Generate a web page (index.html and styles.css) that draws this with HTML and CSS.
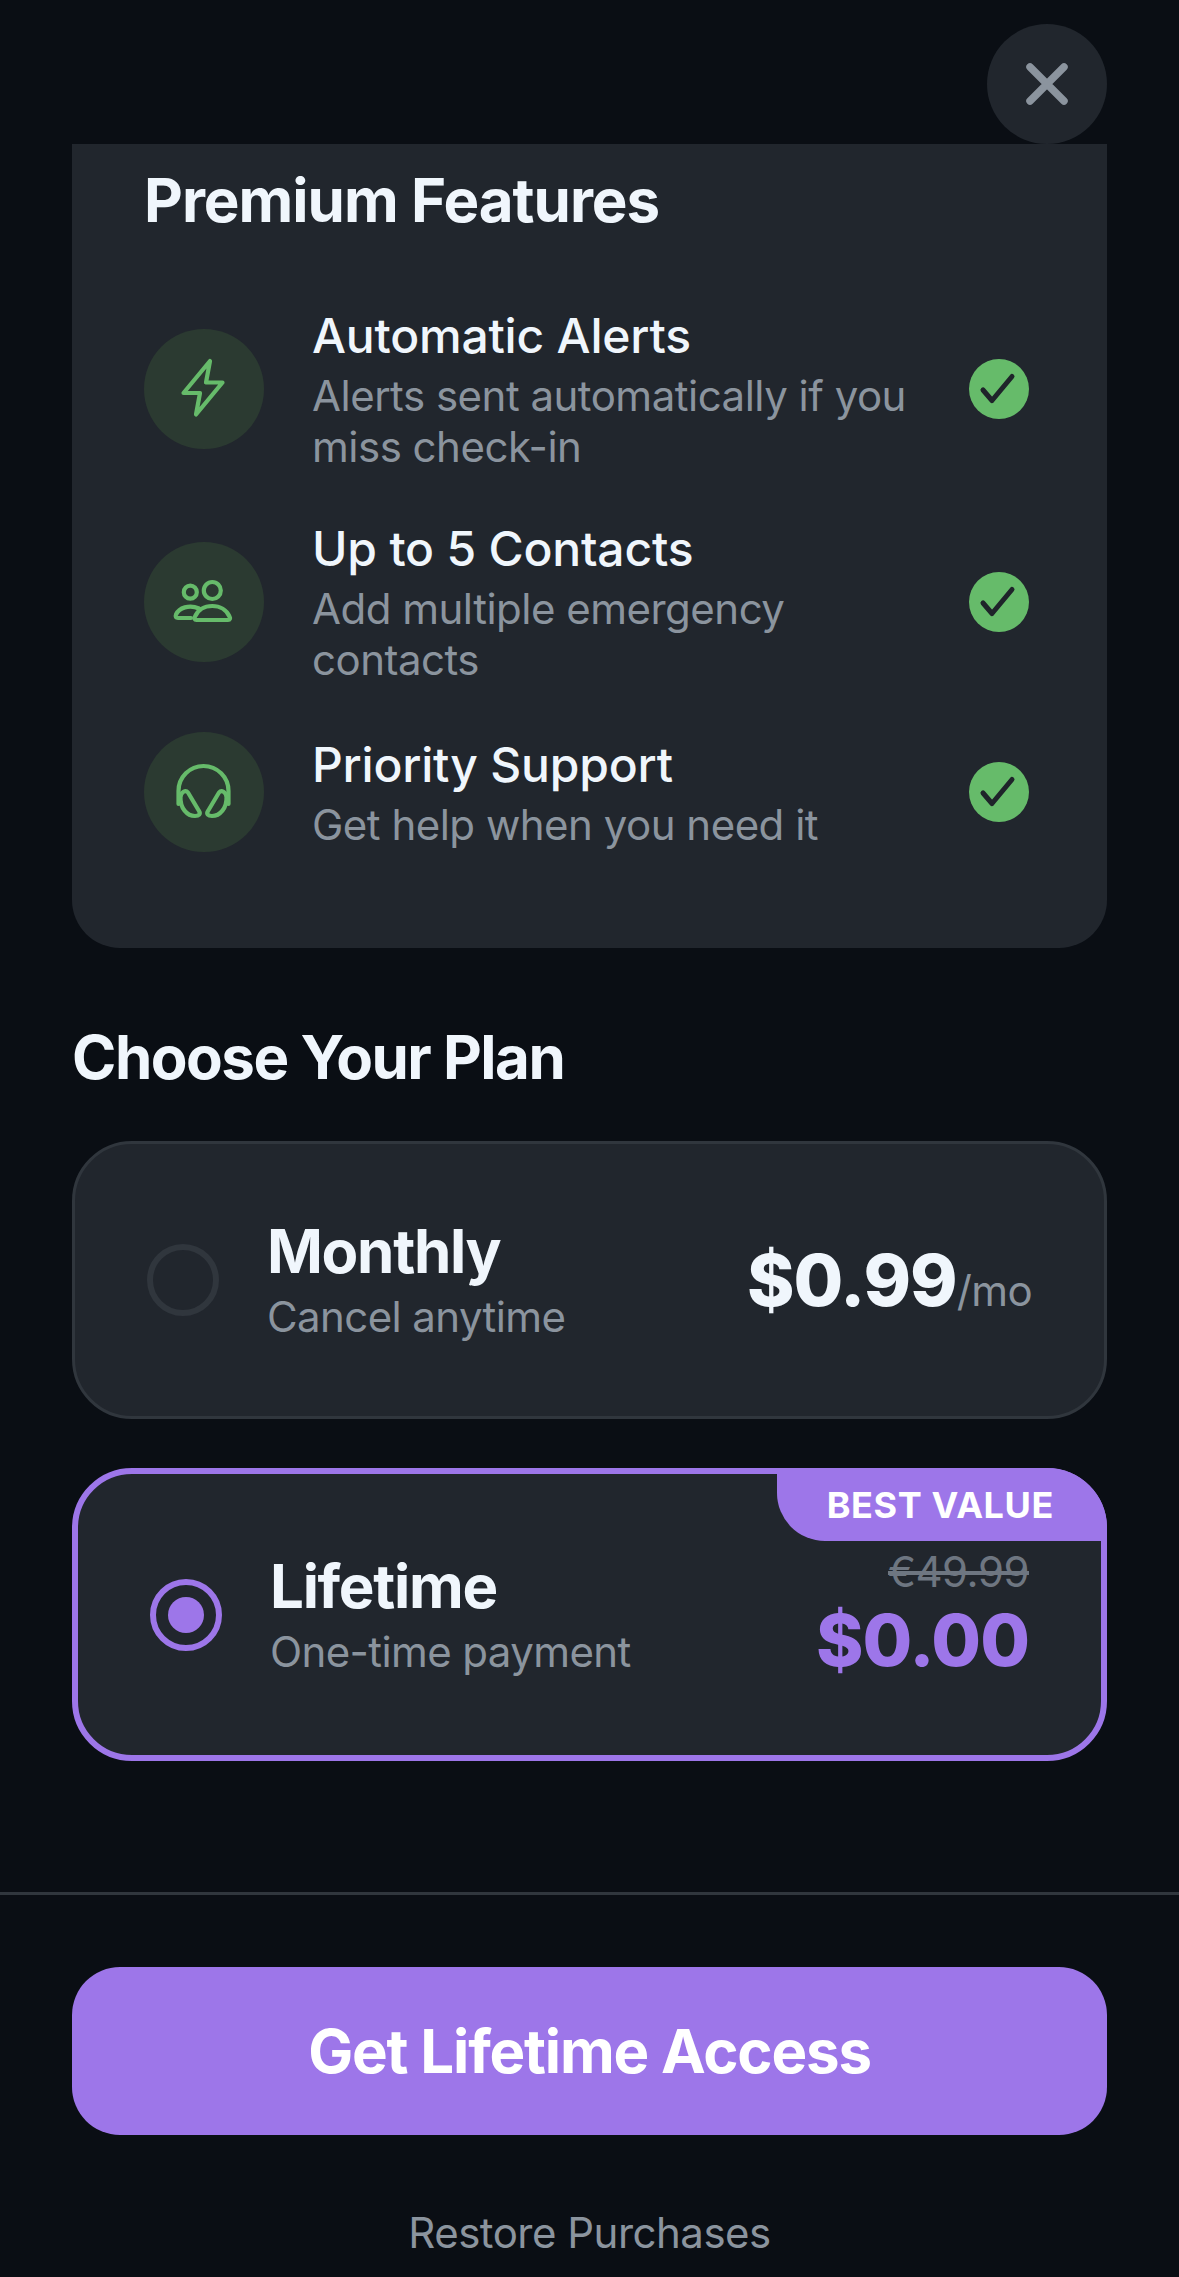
FILE: index.html
```html
<!DOCTYPE html>
<html lang="en">
<head>
    <meta charset="UTF-8">
    <meta name="viewport" content="width=device-width, initial-scale=1.0">
    <title>Premium</title>
    <link rel="stylesheet" href="styles.css">
</head>
<body>
    <div class="content">
        <div class="closeRow">
            <button class="closeBtn" type="button" aria-label="Close">
                <svg width="120" height="120" viewBox="0 0 120 120"><path d="M43 43 L77 77 M77 43 L43 77" class="closeX"/></svg>
            </button>
        </div>

        <section class="featuresCard">
            <h2 class="cardTitle">Premium Features</h2>
            <ul class="featureList">
                <li class="feature">
                    <span class="featureIcon">
                        <svg width="120" height="120" viewBox="0 0 120 120"><path class="line" d="M66 32 L62 53.5 H78.5 L52 85.5 L56 64 H39.5 Z"/></svg>
                    </span>
                    <div class="featureText">
                        <div class="featureName">Automatic Alerts</div>
                        <div class="featureDesc">Alerts sent automatically if you miss check-in</div>
                    </div>
                    <span class="check">
                        <svg width="60" height="60" viewBox="0 0 60 60"><path class="checkMark" d="M14 31 L23 41.5 L43 17.5"/></svg>
                    </span>
                </li>
                <li class="feature">
                    <span class="featureIcon">
                        <svg width="120" height="120" viewBox="0 0 120 120">
                            <circle class="line" cx="68.3" cy="48.5" r="8.5"/>
                            <circle class="line" cx="46.3" cy="50.2" r="6.5"/>
                            <path class="line" d="M52.5 78 C50.5 78 50 76.5 51 74.5 C54 68 60.5 64 68.3 64 C76 64 82.5 68 85.5 74.5 C86.5 76.5 86 78 84 78 Z"/>
                            <path class="line" d="M55 66.5 C45 62 35 66 32 72.5 C31 75 32 76 34 76 H47"/>
                        </svg>
                    </span>
                    <div class="featureText">
                        <div class="featureName">Up to 5 Contacts</div>
                        <div class="featureDesc">Add multiple emergency contacts</div>
                    </div>
                    <span class="check">
                        <svg width="60" height="60" viewBox="0 0 60 60"><path class="checkMark" d="M14 31 L23 41.5 L43 17.5"/></svg>
                    </span>
                </li>
                <li class="feature">
                    <span class="featureIcon">
                        <svg width="120" height="120" viewBox="0 0 120 120">
                            <path class="line" d="M34.5 72 V59 a25 25 0 0 1 50 0 V72"/>
                            <path class="line" d="M44 60.5 L55 79 C57 82 55 84 51 84 C43 84 36 76 36.5 65 C37 60 41.5 57.5 44 60.5 Z"/>
                            <path class="line" d="M75 60.5 L64 79 C62 82 64 84 68 84 C76 84 83 76 82.5 65 C82 60 77.5 57.5 75 60.5 Z"/>
                        </svg>
                    </span>
                    <div class="featureText">
                        <div class="featureName">Priority Support</div>
                        <div class="featureDesc">Get help when you need it</div>
                    </div>
                    <span class="check">
                        <svg width="60" height="60" viewBox="0 0 60 60"><path class="checkMark" d="M14 31 L23 41.5 L43 17.5"/></svg>
                    </span>
                </li>
            </ul>
        </section>

        <h2 class="planHeading">Choose Your Plan</h2>

        <div class="plan">
            <span class="radio"></span>
            <div class="planText">
                <div class="planName">Monthly</div>
                <div class="planDesc">Cancel anytime</div>
            </div>
            <div class="planPrice">
                <span class="priceBig">$0.99</span><span class="pricePer">/mo</span>
            </div>
        </div>

        <div class="plan selected">
            <span class="badge">BEST VALUE</span>
            <span class="radio"><span class="radioDot"></span></span>
            <div class="planText">
                <div class="planName">Lifetime</div>
                <div class="planDesc">One-time payment</div>
            </div>
            <div class="planPrice stacked">
                <span class="priceOld">€49.99</span>
                <span class="priceBig">$0.00</span>
            </div>
        </div>
    </div>

    <footer class="footer">
        <button class="cta" type="button">Get Lifetime Access</button>
        <a class="restore" href="#">Restore Purchases</a>
    </footer>
</body>
</html>
```

FILE: styles.css
```css
* {
    box-sizing: border-box;
}

body {
    font-family: Inter, "Noto Sans", sans-serif;
    background-color: #0a0e14;
    color: #f0f6fc;
    margin: 0;
    width: 1179px;
    height: 2277px;
    overflow: hidden;
}

.content {
    padding: 24px 72px 0;
    height: 1892px;
}

.closeRow {
    display: flex;
    justify-content: flex-end;
}

.closeBtn {
    width: 120px;
    height: 120px;
    padding: 0;
    border: none;
    border-radius: 50%;
    background-color: #21262d;
    display: block;
}

.closeBtn svg,
.featureIcon svg,
.check svg {
    display: block;
}

.closeX {
    fill: none;
    stroke: #8b949e;
    stroke-width: 7.5;
    stroke-linecap: round;
}

/* features */
.featuresCard {
    background-color: #21262d;
    border-radius: 0 0 48px 48px;
    padding: 20px 72px 96px;
}

.cardTitle,
.planHeading {
    margin: 0;
    font-size: 60px;
    line-height: 72px;
    font-weight: 700;
    letter-spacing: -1px;
}

.featureList {
    list-style: none;
    margin: 70px 0 0;
    padding: 0;
    display: flex;
    flex-direction: column;
    gap: 47px;
}

.feature {
    display: flex;
    align-items: center;
    gap: 48px;
    padding-right: 6px;
}

.featureIcon {
    flex: none;
    width: 120px;
    height: 120px;
    border-radius: 50%;
    background-color: #2b3a31;
}

.line {
    fill: none;
    stroke: #66bb6a;
    stroke-width: 4.2;
    stroke-linecap: round;
    stroke-linejoin: round;
}

.featureText {
    flex: 1;
}

.featureName {
    font-size: 48px;
    line-height: 60px;
    font-weight: 500;
    letter-spacing: -0.2px;
    margin-bottom: 4px;
}

.featureDesc {
    font-size: 42px;
    line-height: 51px;
    letter-spacing: -0.5px;
    color: #8b949e;
}

.check {
    flex: none;
    width: 60px;
    height: 60px;
    border-radius: 50%;
    background-color: #66bb6a;
}

.checkMark {
    fill: none;
    stroke: #1f242a;
    stroke-width: 5;
    stroke-linecap: round;
    stroke-linejoin: round;
}

/* plans */
.planHeading {
    margin: 73px 0 48px;
    letter-spacing: -1.5px;
}

.plan {
    position: relative;
    display: flex;
    align-items: center;
    gap: 48px;
    height: 278px;
    padding: 0 72px;
    background-color: #21262d;
    border: 3px solid #30363d;
    border-radius: 60px;
    margin-bottom: 49px;
}

.plan.selected {
    height: 293px;
    border: 6px solid #9d76e9;
    margin-bottom: 0;
}

.radio {
    flex: none;
    width: 72px;
    height: 72px;
    border: 6px solid #30363d;
    border-radius: 50%;
    display: flex;
    align-items: center;
    justify-content: center;
}

.selected .radio {
    border-color: #9d76e9;
}

.radioDot {
    width: 36px;
    height: 36px;
    border-radius: 50%;
    background-color: #9d76e9;
}

.planText {
    flex: 1;
    padding-bottom: 3px;
}

.planName {
    font-size: 60px;
    line-height: 72px;
    font-weight: 700;
    letter-spacing: -1.3px;
    margin-bottom: 4px;
}

.planDesc {
    font-size: 42px;
    line-height: 51px;
    letter-spacing: -0.6px;
    color: #8b949e;
}

.planPrice {
    display: flex;
    align-items: baseline;
}

.planPrice.stacked {
    flex-direction: column;
    align-items: flex-end;
}

.priceBig {
    font-size: 72px;
    line-height: 86px;
    font-weight: 800;
    letter-spacing: -1px;
}

.selected .priceBig {
    color: #9d76e9;
}

.pricePer {
    font-size: 42px;
    letter-spacing: -0.6px;
    color: #8b949e;
}

.priceOld {
    font-size: 42px;
    line-height: 51px;
    letter-spacing: -0.5px;
    color: #6e7681;
    text-decoration: line-through;
}

.badge {
    position: absolute;
    top: -6px;
    right: -6px;
    height: 73px;
    padding: 0 53px 0 50px;
    display: flex;
    align-items: center;
    background-color: #9d76e9;
    border-radius: 0 60px 0 48px;
    color: #fff;
    font-size: 36px;
    font-weight: 700;
    letter-spacing: 0.6px;
}

/* footer */
.footer {
    border-top: 3px solid #30363d;
    padding: 72px 72px 0;
    display: flex;
    flex-direction: column;
    align-items: center;
}

.cta {
    width: 100%;
    height: 168px;
    border: none;
    border-radius: 48px;
    background-color: #9d76e9;
    color: #fff;
    font-family: inherit;
    font-size: 60px;
    font-weight: 700;
    letter-spacing: -1.2px;
}

.restore {
    margin-top: 72px;
    font-size: 42px;
    line-height: 51px;
    letter-spacing: -0.5px;
    color: #8b949e;
    text-decoration: none;
}
```
